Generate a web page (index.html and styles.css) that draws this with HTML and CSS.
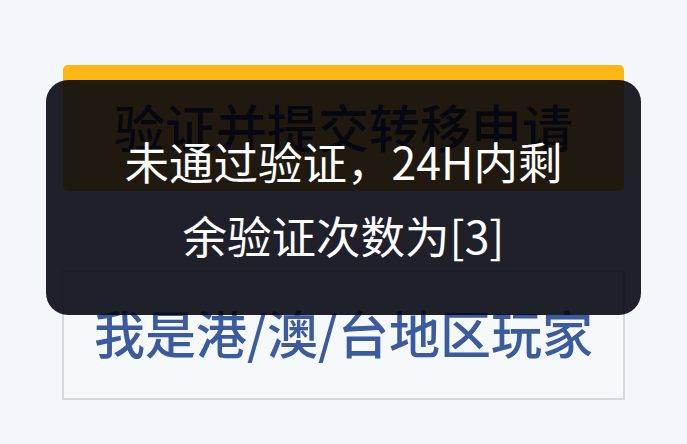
FILE: index.html
```html
<!DOCTYPE html>
<html lang="zh-CN">
<head>
<meta charset="utf-8">
<link rel="stylesheet" href="styles.css">
</head>
<body>
<div class="page">
  <div class="actions">
    <button class="btn-primary">验证并提交转移申请</button>
    <button class="btn-outline">我是港/澳/台地区玩家</button>
  </div>
  <div class="toast">
    <p class="toast-text">未通过验证，24H内剩<br>余验证次数为[3]</p>
  </div>
</div>
</body>
</html>
```
FILE: styles.css
```css
html, body {
  margin: 0;
  padding: 0;
}
body {
  background: #f3f6fa;
  font-family: "Noto Sans CJK SC", "Noto Sans", sans-serif;
  width: 687px;
  height: 444px;
  overflow: hidden;
}
.page {
  position: relative;
  width: 687px;
  height: 444px;
}
.actions {
  display: flex;
  flex-direction: column;
  padding: 65px 0 0 62px;
  width: 563px;
  gap: 79px;
}
.btn-primary {
  height: 126px;
  margin: 0 1px;
  border: none;
  border-radius: 5px;
  background: #fbb713;
  color: #1c1a16;
  font-family: inherit;
  font-size: 51px;
  font-weight: 500;
  padding: 0 0 4px 0;
}
.btn-outline {
  height: 130px;
  border: 2px solid #d5d9df;
  border-radius: 0;
  background: #f6f9fc;
  color: #3c5a9e;
  font-family: inherit;
  font-size: 51px;
  font-weight: 500;
  padding: 0 0 6px 0;
}
.toast {
  position: absolute;
  left: 46px;
  top: 80px;
  width: 595px;
  height: 235px;
  border-radius: 22px;
  background: rgba(4, 6, 16, 0.89);
  display: flex;
  align-items: center;
  justify-content: center;
}
.toast-text {
  margin: 0;
  color: #ffffff;
  font-size: 44.5px;
  line-height: 74px;
  text-align: center;
}
```
